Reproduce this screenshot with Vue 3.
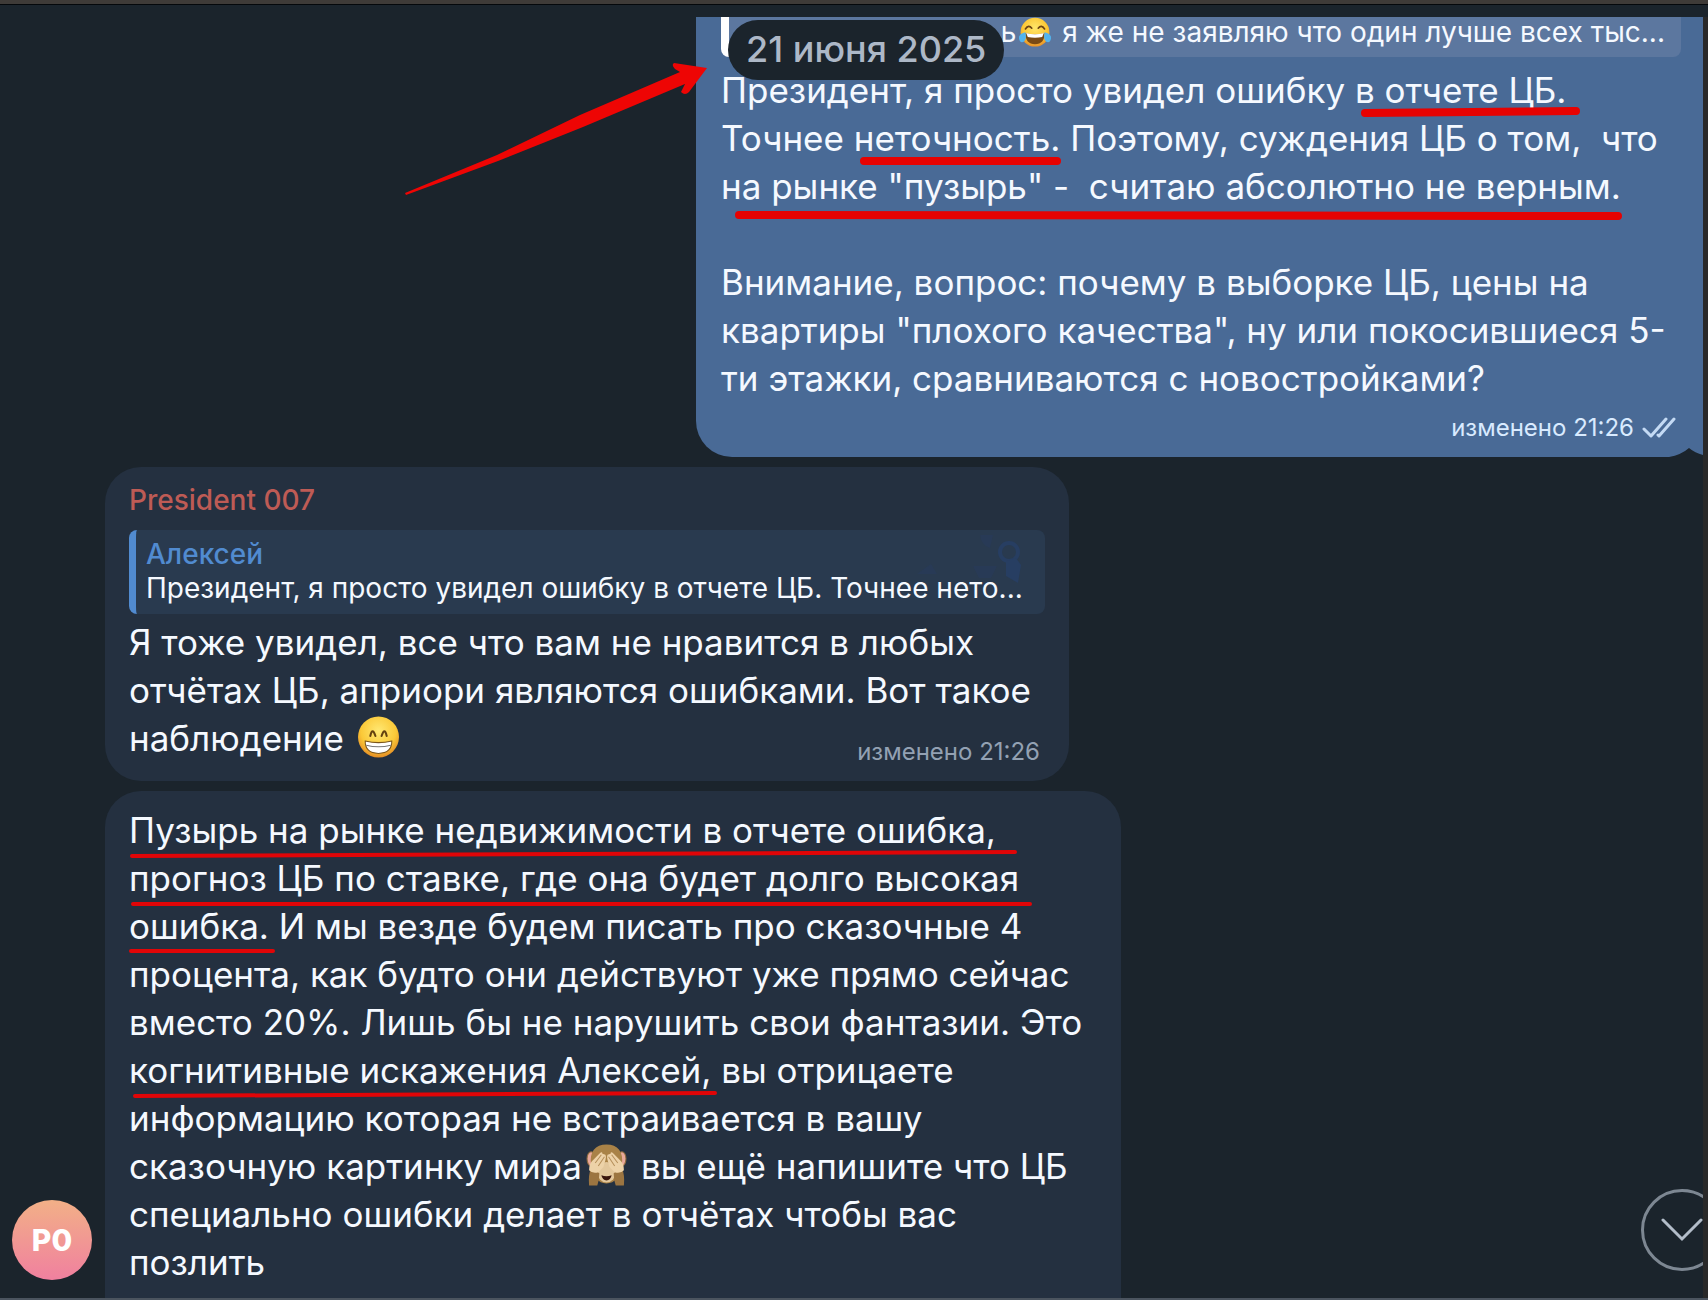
<script setup>
const sentLines = [
  'Президент, я просто увидел ошибку в отчете ЦБ.',
  'Точнее неточность. Поэтому, суждения ЦБ о том,  что',
  'на рынке "пузырь" -  считаю абсолютно не верным.',
  '',
  'Внимание, вопрос: почему в выборке ЦБ, цены на',
  'квартиры "плохого качества", ну или покосившиеся 5-',
  'ти этажки, сравниваются с новостройками?',
].join('\n')
</script>

<template>
  <div class="window">
    <header class="titlebar"></header>
    <main class="chat">
      <time class="date" datetime="2025-06-21">21 июня 2025</time>

      <article class="bubble sent">
        <blockquote class="quote quote-sent">
          <p class="small">ь<svg class="emoji emoji-small" viewBox="0 0 40 40" role="img" aria-label="смех до слёз">
              <defs>
                <radialGradient id="joy" cx="50%" cy="35%" r="65%">
                  <stop offset="0" stop-color="#ffe66a" /><stop offset=".65" stop-color="#fcc733" /><stop offset="1" stop-color="#e8912a" />
                </radialGradient>
              </defs>
              <circle cx="20" cy="19" r="18" fill="url(#joy)" />
              <path d="M8 15q4-6 8-1M24 14q4-5 8 1" fill="none" stroke="#6b4313" stroke-width="2" stroke-linecap="round" />
              <path d="M8 20q12 3 24 0q0 14-12 14T8 20z" fill="#7a4a14" />
              <path d="M9 20q11 3 22 0l-2 5q-9 2-18 0z" fill="#fff" />
              <path d="M8 19q-9 2-8 8q1 6 6 4q4-3 2-12zM32 19q9 2 8 8q-1 6-6 4q-4-3-2-12z" fill="#53b4ee" />
            </svg> я же не заявляю что один лучше всех тыс...</p>
        </blockquote>
        <p class="text">{{ sentLines }}</p>
        <footer class="meta meta-sent">
          <span>изменено 21:26</span>
          <svg class="checks" width="34" height="22" viewBox="0 0 34 22" role="img" aria-label="прочитано">
            <path d="M2 12l7 7L24 2M16 18l1 1L32 2" />
          </svg>
        </footer>
        <svg class="tail" width="34" height="9" viewBox="0 0 34 9" aria-hidden="true">
          <path d="M0 9Q12 7 20 0Q26 5 34 7V9z" fill="#1b242c" />
        </svg>
        <svg class="marks" width="1007" height="441" viewBox="0 0 1007 441" aria-hidden="true">
          <path class="thick" d="M669 96L880 94M168 144H361M43 198L922 199" />
          <path d="M-291 176L-199 138L-116 98L-16 55L-21 52Q-25 48-22 46L11 51L-7 75Q-11 79-15 75L-11 67L-113 110L-198 144L-290 178z" fill="#ee0504" />
        </svg>
      </article>

      <article class="bubble received first">
        <h2 class="author">President 007</h2>
        <blockquote class="quote quote-received">
          <svg class="pattern" width="210" height="84" viewBox="0 0 210 84" aria-hidden="true">
            <path d="M155 18q-9-3-10-13h13zM82 44l14-10 6 10zM138 36h24l-6 12h-12z" fill="#283a56" />
            <circle cx="174" cy="22" r="9" fill="none" stroke="#273e62" stroke-width="4" />
            <path d="M171 31l10-3 5 7-3 18-12-7z" fill="#273e62" />
          </svg>
          <p class="small cite">Алексей</p>
          <p class="small">Президент, я просто увидел ошибку в отчете ЦБ. Точнее нето...</p>
        </blockquote>
        <p class="text">Я тоже увидел, все что вам не нравится в любых<br>отчётах ЦБ, априори являются ошибками. Вот такое<br>наблюдение <svg class="emoji" viewBox="0 0 40 40" role="img" aria-label="улыбка">
            <defs>
              <radialGradient id="grin" cx="50%" cy="35%" r="65%">
                <stop offset="0" stop-color="#ffe873" /><stop offset=".65" stop-color="#fbc938" /><stop offset="1" stop-color="#e58e25" />
              </radialGradient>
            </defs>
            <circle cx="20" cy="20" r="20" fill="url(#grin)" />
            <path d="M12 19q2-9 5 0M23 19q3-9 5 0" fill="none" stroke="#65420f" stroke-width="2" stroke-linecap="round" />
            <path d="M7 24q13 3 26 0q0 12-13 12T7 24z" fill="#fff" stroke="#7b551b" stroke-width="1" />
            <path d="M8 28q12 3 24 0" fill="none" stroke="#777" stroke-width="1" />
          </svg></p>
        <footer class="meta meta-received">изменено 21:26</footer>
      </article>

      <div class="row">
        <span class="avatar">P0</span>
        <article class="bubble received second">
          <p class="text">Пузырь на рынке недвижимости в отчете ошибка,<br>прогноз ЦБ по ставке, где она будет долго высокая<br>ошибка. И мы везде будем писать про сказочные 4<br>процента, как будто они действуют уже прямо сейчас<br>вместо 20%. Лишь бы не нарушить свои фантазии. Это<br>когнитивные искажения Алексей, вы отрицаете<br>информацию которая не встраивается в вашу<br>сказочную картинку мира<svg class="emoji" viewBox="0 0 40 40" role="img" aria-label="обезьяна закрывает глаза">
              <ellipse cx="5" cy="14" rx="4" ry="7" fill="#e9a99a" stroke="#8d6a3d" stroke-width="1" />
              <ellipse cx="35" cy="14" rx="4" ry="7" fill="#e9a99a" stroke="#8d6a3d" stroke-width="1" />
              <path d="M5 20C3 7 9 0 20 0s17 7 15 20c-1 11-7 18-15 18S6 31 5 20z" fill="#a98247" />
              <ellipse cx="20" cy="27" rx="9" ry="10" fill="#e3c79c" />
              <path d="M15 30q5 2 10 0q-1 5-5 5t-5-5z" fill="#3a160d" />
              <path d="M3 40Q2 30 5 23l8 5q0 7-2 12zM37 40q1-10-2-17l-8 5q0 7 2 12z" fill="#9c7541" />
              <path d="M3 25q0-6 3-9l8-8q2-1 2 1l3 1q1 2 0 5l-2 7-5 5q-5 2-9-2z" fill="#edd2a8" />
              <path d="M37 25q0-6-3-9l-8-8q-2-1-2 1l-3 1q-1 2 0 5l2 7 5 5q5 2 9-2z" fill="#edd2a8" />
              <path d="M9 18l6-8M12 21l6-9M31 18l-6-8M28 21l-6-9" stroke="#b58f5a" stroke-width="1" />
            </svg> вы ещё напишите что ЦБ<br>специально ошибки делает в отчётах чтобы вас<br>позлить</p>
          <svg class="marks" width="1017" height="507" viewBox="0 0 1017 507" aria-hidden="true">
            <path d="M27 65L910 61M28 113H925M26 160H168M30 305L610 302" />
          </svg>
        </article>
      </div>

      <button class="scroll" type="button" aria-label="Прокрутить вниз">
        <svg width="44" height="24" viewBox="0 0 44 24" aria-hidden="true"><path d="M3 2l19 19L41 2" /></svg>
      </button>
    </main>
  </div>
</template>

<style>
body {
  margin: 0;
  background: #1b242c;
}
</style>

<style scoped>
.window {
  display: flex;
  flex-direction: column;
  min-height: 100vh;
  box-sizing: border-box;
  background: #1b242c;
  border-bottom: 2px solid #4b545f;
  font-family: Inter, "Liberation Sans", sans-serif;
  color: #f5f9ff;
}
.titlebar {
  height: 12px;
  border-top: 4px solid #3f3b38;
  box-shadow: inset 0 1px #05080b;
}
.titlebar + .chat {
  margin-top: 1px;
}
.chat {
  position: relative;
  flex: 1;
  display: flex;
  flex-direction: column;
  gap: 10px;
  overflow: hidden;
  border-right: 5px solid #292929;
}
p, h2, blockquote {
  margin: 0;
}
.bubble {
  position: relative;
  box-sizing: border-box;
  max-width: 100%;
  border-radius: 36px;
}
.sent {
  align-self: flex-end;
  width: 1007px;
  padding: 0 22px 4px 25px;
  background: #496a96;
  border-radius: 0 0 0 36px;
}
.received {
  background: #243040;
}
.first {
  width: 964px;
  margin-left: 105px;
  padding: 16px 24px 4px;
}
.second {
  width: 1016px;
  padding: 15px 24px 12px;
  border-radius: 36px 36px 0 0;
}
.text {
  font-size: 35px;
  line-height: 48px;
  white-space: pre;
}
.small {
  font-size: 28px;
  line-height: 34px;
  white-space: pre;
}
.quote {
  position: relative;
  box-sizing: border-box;
  border-radius: 8px;
}
.quote-sent {
  display: flex;
  justify-content: flex-end;
  height: 40px;
  margin-bottom: 9px;
  padding-right: 16px;
  background: #5c779f;
  border-left: 8px solid #fff;
  border-radius: 0 0 8px 8px;
}
.quote-sent .small {
  line-height: 30px;
}
.quote-received {
  margin: 13px 0 4px;
  padding: 7px 10px 9px;
  background: #293a4f;
  border-left: 7px solid #518bd0;
}
.quote-received .small {
  position: relative;
}
.pattern {
  position: absolute;
  top: 0;
  right: 0;
}
.author {
  font-size: 28px;
  line-height: 34px;
  font-weight: 500;
  color: #be5b55;
}
.cite {
  font-weight: 500;
  color: #518bd0;
}
.meta {
  display: flex;
  justify-content: flex-end;
  align-items: center;
  font-size: 24px;
  line-height: 32px;
}
.meta-sent {
  gap: 8px;
  margin-top: 10px;
  padding: 0 5px 9px 0;
  color: #d9ebff;
}
.meta-received {
  margin-top: -26px;
  padding: 0 5px 9px 0;
  color: #93a1b3;
}
.checks path {
  fill: none;
  stroke: #c4daf4;
  stroke-width: 3;
  stroke-linecap: round;
  stroke-linejoin: round;
}
.tail {
  position: absolute;
  right: 0;
  bottom: 0;
}
.marks {
  position: absolute;
  top: 0;
  left: 0;
  overflow: visible;
  pointer-events: none;
}
.marks path:not([fill]) {
  stroke: #e10507;
  stroke-width: 4;
  stroke-linecap: round;
}
.marks .thick:not([fill]) {
  stroke: #e60202;
  stroke-width: 8;
}
.emoji {
  width: 41px;
  height: 42px;
  margin: 0 4px;
  vertical-align: -7px;
}
.emoji-small {
  width: 34px;
  height: 32px;
  margin: 0 2px;
  vertical-align: top;
}
.date {
  position: absolute;
  z-index: 1;
  top: 3px;
  left: 728px;
  padding: 0 18px 2px;
  border-radius: 30px;
  background: #1b242c;
  color: #adb8c7;
  font-size: 36px;
  line-height: 58px;
  font-weight: 500;
}
.row {
  display: flex;
  flex: 1;
  align-items: stretch;
  gap: 13px;
  padding-left: 12px;
}
.avatar {
  align-self: flex-end;
  flex: none;
  width: 80px;
  margin-bottom: 18px;
  border-radius: 50%;
  background: linear-gradient(#f2b087, #f0809f);
  color: #fff;
  text-align: center;
  font-size: 30px;
  line-height: 80px;
  font-weight: 800;
}
.scroll {
  position: absolute;
  right: -20px;
  bottom: 27px;
  display: grid;
  place-items: center;
  width: 82px;
  height: 82px;
  padding: 0;
  border: 3px solid #7d8792;
  border-radius: 50%;
  background: transparent;
}
.scroll path {
  fill: none;
  stroke: #b3bdc9;
  stroke-width: 3;
  stroke-linecap: round;
}
</style>
